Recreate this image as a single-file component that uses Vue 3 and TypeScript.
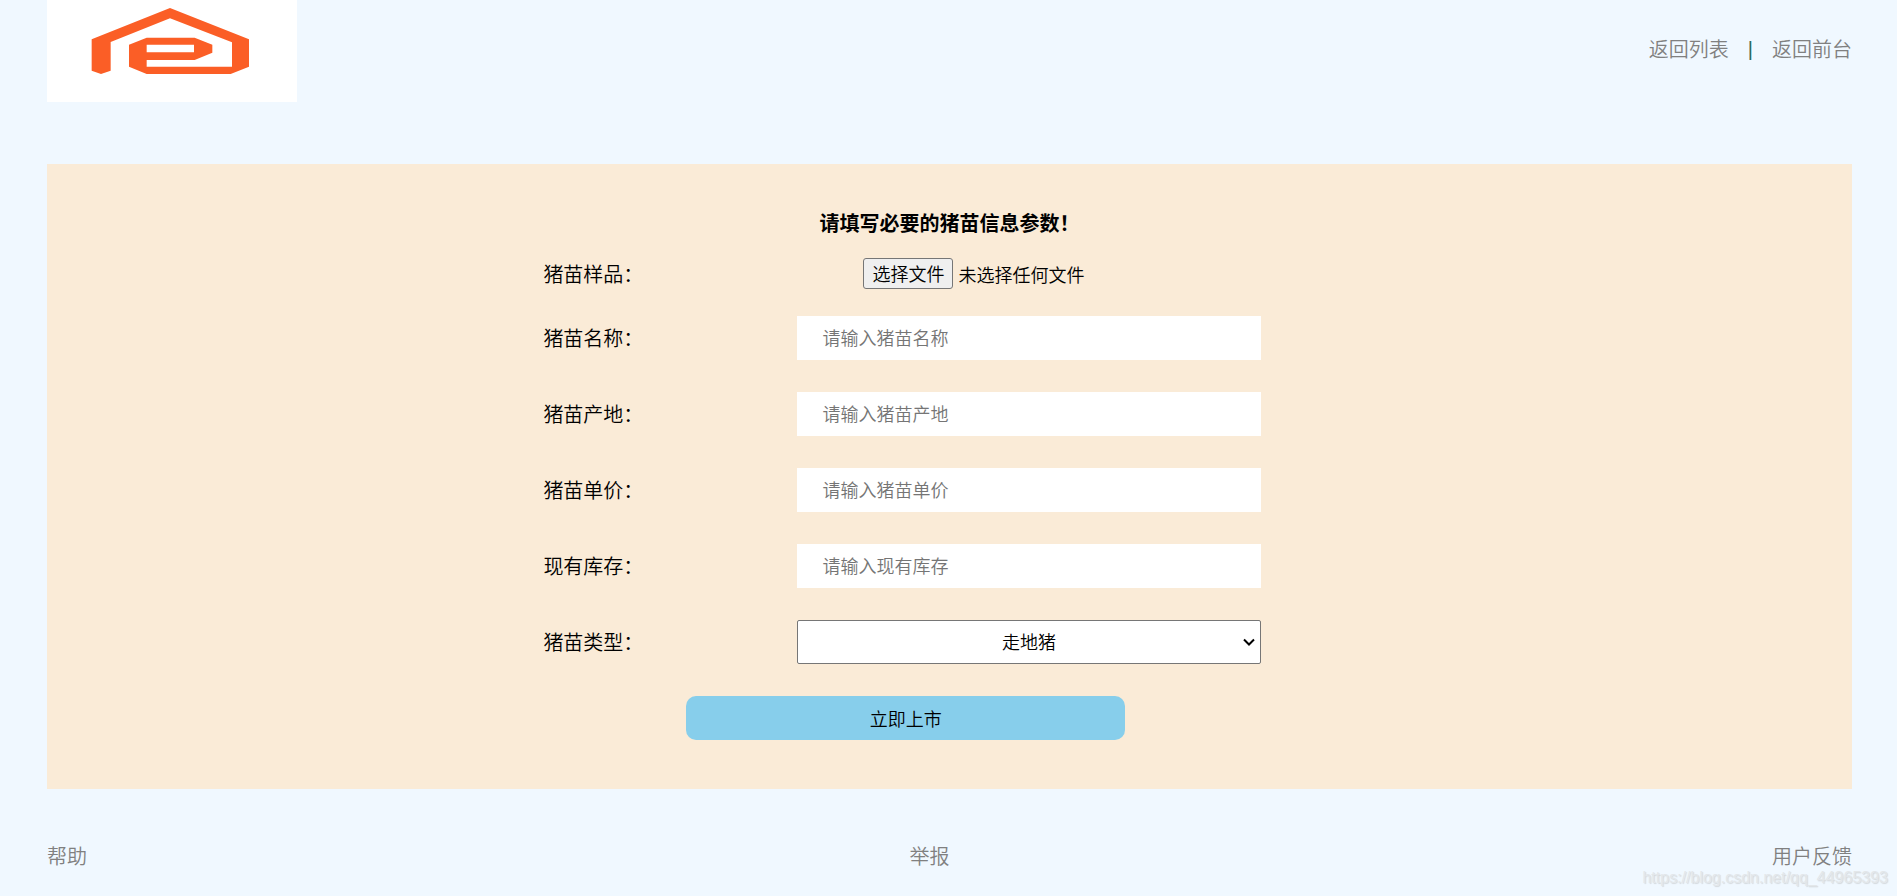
<script setup lang="ts">
import { reactive, ref } from 'vue'

interface TextField {
  id: 'name' | 'origin' | 'price' | 'stock'
  label: string
  placeholder: string
}

const fields: TextField[] = [
  { id: 'name', label: '猪苗名称：', placeholder: '请输入猪苗名称' },
  { id: 'origin', label: '猪苗产地：', placeholder: '请输入猪苗产地' },
  { id: 'price', label: '猪苗单价：', placeholder: '请输入猪苗单价' },
  { id: 'stock', label: '现有库存：', placeholder: '请输入现有库存' },
]

const form = reactive({ name: '', origin: '', price: '', stock: '', kind: '走地猪' })
const fileName = ref('未选择任何文件')

function onFile(event: Event) {
  const file = (event.target as HTMLInputElement).files?.[0]
  fileName.value = file ? file.name : '未选择任何文件'
}
</script>

<template>
  <div class="page">
    <header class="header">
      <svg class="logo" viewBox="0 0 750 306" role="img" aria-label="logo">
        <path
          fill="#fb5e26"
          fill-rule="evenodd"
          d="M134 118 L369 24 L606 118 V200 L551 222 H299 L246 200 V134 L299 113 H443 L496 134 V158 L443 180 H299 V200 H555 V127 L369 55 L191 126 V212 L162 222 L134 212 Z M299 134 V157 H441 V134 Z"
        />
      </svg>
      <nav class="nav">
        <a href="#list">返回列表</a>
        <span class="bar">|</span>
        <a href="#home">返回前台</a>
      </nav>
    </header>

    <main class="panel">
      <form class="form" @submit.prevent>
        <h1 class="title">请填写必要的猪苗信息参数！</h1>

        <div class="row file-row">
          <label class="label" for="sample">猪苗样品：</label>
          <div class="file">
            <span class="file-button">选择文件</span>
            <span>{{ fileName }}</span>
            <input id="sample" class="file-input" type="file" @change="onFile" />
          </div>
        </div>

        <div v-for="field in fields" :key="field.id" class="row">
          <label class="label" :for="field.id">{{ field.label }}</label>
          <input
            :id="field.id"
            v-model="form[field.id]"
            class="control"
            type="text"
            :placeholder="field.placeholder"
          />
        </div>

        <div class="row">
          <label class="label" for="kind">猪苗类型：</label>
          <div class="select-box">
            <select id="kind" v-model="form.kind" class="control select">
              <option>走地猪</option>
            </select>
            <svg class="chevron" viewBox="0 0 12 8" aria-hidden="true">
              <path d="M1 1.5 L6 6.5 L11 1.5" fill="none" stroke="#000" stroke-width="2" />
            </svg>
          </div>
        </div>

        <button class="submit" type="submit">立即上市</button>
      </form>
    </main>

    <footer class="footer">
      <a href="#help">帮助</a>
      <a href="#report">举报</a>
      <a href="#feedback">用户反馈</a>
    </footer>
    <span class="watermark">https://blog.csdn.net/qq_44965393</span>
  </div>
</template>

<style>
body {
  margin: 0;
  background: #f0f8ff;
}
</style>

<style scoped>
.page {
  position: relative;
  box-sizing: border-box;
  min-height: 100vh;
  padding: 0 45px 24px 47px;
  background: #f0f8ff;
  color: #000;
  font-family: "Noto Sans CJK SC", sans-serif;
  font-size: 20px;
  font-weight: 350;
  line-height: 30px;
}
a {
  color: #808080;
  text-decoration: none;
}
.header {
  display: flex;
  justify-content: space-between;
  align-items: center;
}
.logo {
  display: block;
  width: 250px;
  height: 102px;
  background: #fff;
}
.nav {
  display: flex;
  align-items: center;
  gap: 19px;
  padding-bottom: 4px;
}
.bar {
  color: #2c6a5c;
  font-family: "Liberation Sans", sans-serif;
}
.panel {
  margin-top: 62px;
  padding: 44px 0 49px;
  background: #faebd7;
}
.form {
  width: 45%;
  margin: 0 auto;
}
.title {
  margin: 0 0 20px;
  font-size: 20px;
  font-weight: 700;
  line-height: 30px;
  text-align: center;
}
.row {
  display: grid;
  grid-template-columns: 254fr 463fr 95fr;
  align-items: center;
  margin-bottom: 32px;
}
.file-row {
  margin-bottom: 27px;
}
.file {
  position: relative;
  display: flex;
  align-items: center;
  justify-self: start;
  gap: 5px;
  margin-left: 66px;
  font-size: 18px;
}
.file-button {
  box-sizing: border-box;
  height: 31px;
  padding: 0 8px;
  border: 1px solid #767676;
  border-radius: 3px;
  background: #efefef;
  line-height: 29px;
}
.file-input {
  position: absolute;
  inset: 0;
  width: 100%;
  opacity: 0;
}
.control {
  box-sizing: border-box;
  width: 100%;
  height: 44px;
  padding: 0 25px 2px;
  border: 0;
  background: #fff;
  color: #000;
  font: inherit;
  font-size: 18px;
}
.control::placeholder {
  color: #757575;
}
.select-box {
  position: relative;
  display: flex;
}
.select {
  appearance: none;
  padding: 0 0 2px;
  border: 1px solid #767676;
  border-radius: 2px;
  text-align: center;
  text-align-last: center;
}
.chevron {
  position: absolute;
  top: 18px;
  right: 6px;
  width: 12px;
  height: 8px;
  pointer-events: none;
}
.submit {
  display: block;
  width: 54%;
  height: 44px;
  margin-left: 143px;
  padding: 0;
  border: 0;
  border-radius: 10px;
  background: #87ceeb;
  color: #000;
  font: inherit;
  font-size: 18px;
}
.footer {
  display: flex;
  justify-content: space-between;
  margin-top: 52px;
}
.watermark {
  position: absolute;
  right: 9px;
  bottom: 8px;
  color: #e3e7ea;
  font-family: "Liberation Sans", Arial, sans-serif;
  font-size: 16px;
  font-weight: 400;
  line-height: 20px;
  text-shadow: 1px 1px 1px #d3d8dc;
}
</style>
